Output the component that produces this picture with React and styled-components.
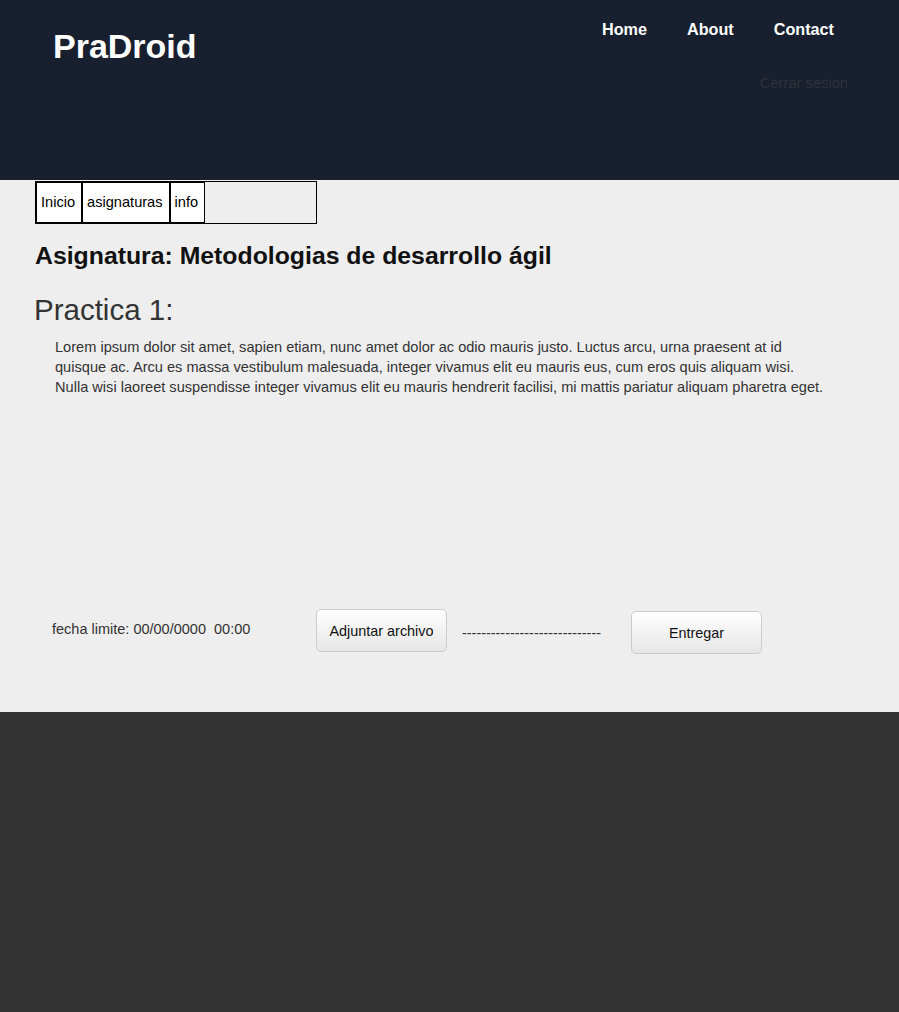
import React from 'react';
import styled, { createGlobalStyle } from 'styled-components';

const GlobalStyle = createGlobalStyle`
    html, body {
        margin: 0;
        padding: 0;
        background-color: #333333;
        font-family: "Liberation Sans", Arial, Helvetica, sans-serif;
    }
`;

const Header = styled.header`
    height: 180px;
    display: flex;
    justify-content: space-between;
    align-items: flex-start;
    background-color: #181f2e;
`;

const Logo = styled.h1`
    margin: 25.5px 0 0 53px;
    font-size: 34px;
    line-height: 40px;
    font-weight: bold;
    color: #ffffff;
`;

const HeaderRight = styled.div`
    display: flex;
    flex-direction: column;
    align-items: flex-end;
    padding: 18.5px 45px 0 0;
`;

const Nav = styled.nav`
    display: flex;
`;

const NavLink = styled.a`
    padding: 0 20px;
    font-size: 16.2px;
    line-height: 20px;
    font-weight: bold;
    color: #ffffff;
    text-decoration: none;
    cursor: pointer;
`;

const Logout = styled.a`
    margin: 35px 6px 0 0;
    font-size: 14.7px;
    line-height: 18px;
    color: #2f3238;
    text-decoration: none;
    cursor: pointer;
`;

const Content = styled.main`
    background-color: #eeeeee;
    padding: 1px 0 58px 35px;
`;

const Tabs = styled.ul`
    display: flex;
    box-sizing: border-box;
    width: 282px;
    height: 43px;
    margin: 0;
    padding: 0;
    list-style: none;
    border: 1px solid #000000;
`;

const Tab = styled.li`
    padding: 0 6px 0 4px;
    border: 1px solid #000000;
    background-color: #ffffff;
    font-size: 14.6px;
    line-height: 39px;
    color: #000000;
    cursor: pointer;
`;

const Subject = styled.h2`
    margin: 17px 0 0 0;
    font-size: 24.8px;
    line-height: 30px;
    font-weight: bold;
    color: #111111;
`;

const TaskTitle = styled.h3`
    margin: 22px 0 0 -1px;
    font-size: 29.5px;
    line-height: 34px;
    font-weight: normal;
    color: #333333;
`;

const Description = styled.p`
    margin: 10px 0 0 20px;
    padding-right: 69px;
    font-size: 14.6px;
    line-height: 20px;
    color: #333333;
`;

const SubmitRow = styled.div`
    display: flex;
    align-items: flex-start;
    margin-top: 212px;
    padding-left: 17px;
`;

const Deadline = styled.span`
    margin-top: 10px;
    width: 264px;
    font-size: 14.5px;
    line-height: 20px;
    color: #333333;
    white-space: pre;
`;

const Button = styled.button`
    box-sizing: border-box;
    width: 131px;
    height: 43px;
    margin-top: ${props => props.$offset || 0}px;
    padding: 0;
    border: 1px solid #cccccc;
    border-radius: 5px;
    background: linear-gradient(to bottom, #ffffff 0%, #e6e6e6 100%);
    font-family: "Liberation Sans", Arial, Helvetica, sans-serif;
    font-size: 14.4px;
    color: #111111;
    cursor: pointer;
`;

const FileName = styled.span`
    margin: 14px 30px 0 15px;
    font-size: 14.4px;
    line-height: 20px;
    color: #333333;
`;

const Footer = styled.footer`
    min-height: 300px;
    background-color: #333333;
`;

const text = 'Lorem ipsum dolor sit amet, sapien etiam, nunc amet dolor ac odio mauris justo. Luctus arcu, urna praesent at id quisque ac. Arcu es massa vestibulum malesuada, integer vivamus elit eu mauris eus, cum eros quis aliquam wisi. Nulla wisi laoreet suspendisse integer vivamus elit eu mauris hendrerit facilisi, mi mattis pariatur aliquam pharetra eget.';

export default function App() {
    return (
        <>
            <GlobalStyle />
            <Header>
                <Logo>PraDroid</Logo>
                <HeaderRight>
                    <Nav>
                        <NavLink>Home</NavLink>
                        <NavLink>About</NavLink>
                        <NavLink>Contact</NavLink>
                    </Nav>
                    <Logout>Cerrar sesion</Logout>
                </HeaderRight>
            </Header>
            <Content>
                <Tabs>
                    <Tab>Inicio</Tab>
                    <Tab>asignaturas</Tab>
                    <Tab>info</Tab>
                </Tabs>
                <Subject>Asignatura: Metodologias de desarrollo ágil</Subject>
                <TaskTitle>Practica 1:</TaskTitle>
                <Description>{text}</Description>
                <SubmitRow>
                    <Deadline>fecha limite: 00/00/0000  00:00</Deadline>
                    <Button>Adjuntar archivo</Button>
                    <FileName>-----------------------------</FileName>
                    <Button $offset={2}>Entregar</Button>
                </SubmitRow>
            </Content>
            <Footer />
        </>
    );
}
